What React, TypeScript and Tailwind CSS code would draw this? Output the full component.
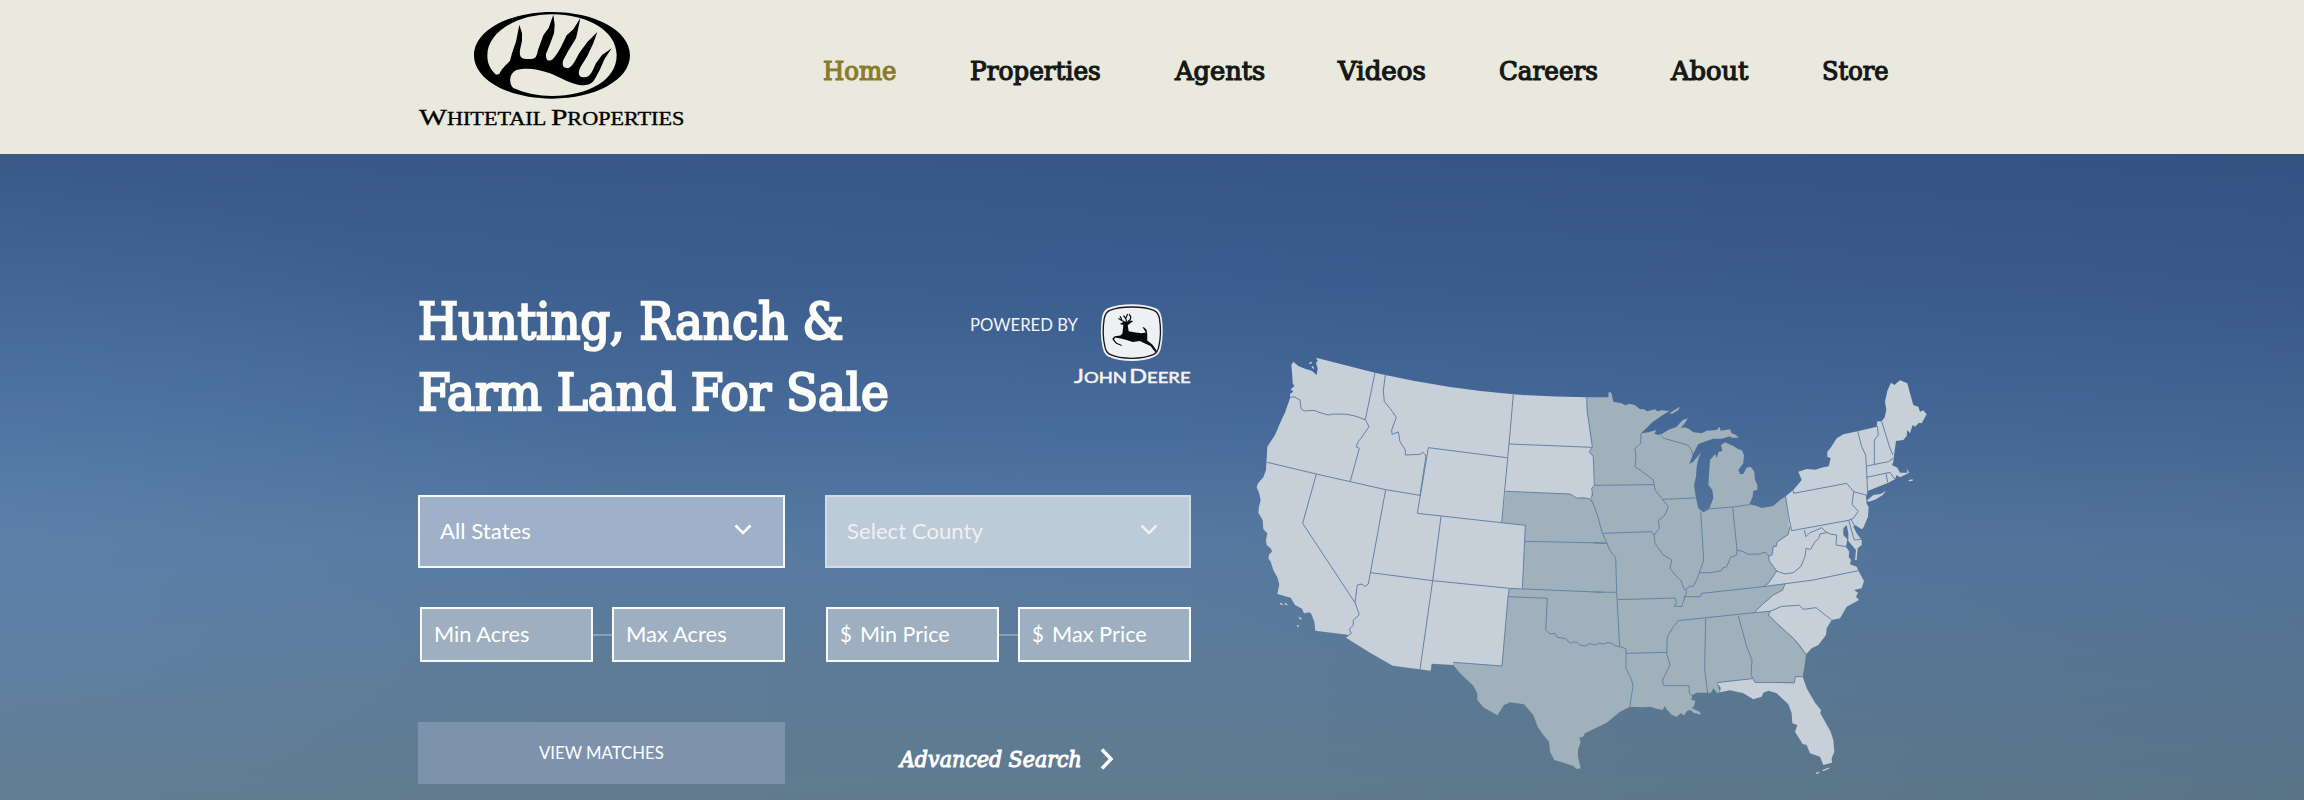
import { useLayoutEffect, useRef, useState, type ReactNode } from "react";

/** Keeps a line of text at an exact width by scaling it horizontally. */
function Fit({ width, className = "", children }: { width: number; className?: string; children: ReactNode }) {
  const ref = useRef<HTMLSpanElement>(null);
  const [scale, setScale] = useState(1);
  useLayoutEffect(() => {
    if (ref.current && ref.current.offsetWidth > 0) setScale(width / ref.current.offsetWidth);
  }, [width]);
  return (
    <span className="block shrink-0 whitespace-nowrap" style={{ width }}>
      <span ref={ref} className={`inline-block origin-left ${className}`} style={{ transform: `scaleX(${scale})` }}>
        {children}
      </span>
    </span>
  );
}

const slab = "font-['DejaVu_Serif',serif] [font-stretch:condensed] font-normal [-webkit-text-stroke:0.045em_currentColor]";
const sans = "font-['Lato',sans-serif]";

const navItems = [
  { label: "Home", width: 74, active: true },
  { label: "Properties", width: 131 },
  { label: "Agents", width: 90 },
  { label: "Videos", width: 88 },
  { label: "Careers", width: 99 },
  { label: "About", width: 77 },
  { label: "Store", width: 67 },
];

function Logo() {
  return (
    <div className="flex w-[300px] flex-col">
      <svg viewBox="0 0 900 300" className="block h-[100px] w-[300px]">
        <path
          fillRule="evenodd"
          fill="#000"
          d="M456 36C586 36 690 92 690 166S586 296 456 296S222 240 222 166S326 36 456 36Z M456 43C350 43 262 96 262 166C262 190 270 208 288 224L298 222C304 206 318 196 330 182L336 160L348 125L358 74L366 100L366 122L360 150C358 168 362 177 378 177L394 177C408 177 411 165 414 150L430 106L446 84L460 44L464 74L462 100L450 132L438 162C436 182 448 186 458 178C476 160 488 130 500 106L520 88L541 54L533 94L528 115L505 152L490 180C484 200 492 206 506 204C522 196 528 174 540 156L562 126L592 96L580 130L562 168L542 200C532 220 536 231 550 232C574 234 578 208 588 190L606 165L635 145L614 176L598 212L584 238C574 256 556 258 534 254C504 248 480 232 450 220C414 206 378 202 350 210C326 220 326 252 340 264C374 280 416 288 456 288C566 288 650 240 650 166S562 43 456 43Z"
        />
      </svg>
      <div className="mt-[4px] ml-[19px] h-[30px] leading-[26px] text-black">
        <Fit width={265} className="font-['Liberation_Serif',serif] text-[18px] [-webkit-text-stroke:0.35px_#000]">
          <span className="text-[24px]">W</span>HITETAIL <span className="text-[24px]">P</span>ROPERTIES
        </Fit>
      </div>
    </div>
  );
}

function DeereLogo() {
  return (
    <div className="flex w-[120px] flex-col items-center">
      <svg viewBox="146 38 192 178" className="block h-[59px] w-[64px]">
        <path
          fill="#eef0f3"
          d="M241 42C268 42 294 46 314 54C326 60 330 72 332 84C336 112 336 142 330 170C328 184 322 194 310 200C290 209 266 213 241 213S192 209 172 200C160 194 156 184 153 170C147 142 147 112 151 84C153 72 157 60 169 54C188 46 214 42 241 42Z"
        />
        <path
          fill="none"
          stroke="#15171c"
          strokeWidth="4"
          d="M241 50C268 50 290 53 308 60C320 65 323 74 325 86C329 112 329 142 323 168C321 181 317 189 306 194C288 202 266 205 241 205S194 202 177 194C166 189 162 181 160 168C154 142 154 112 158 86C160 74 163 65 175 60C193 53 214 50 241 50Z"
        />
        <path
          fill="#07080a"
          d="M205 101L218 94L227 94L241 91L245 93L234 101L229 105L232 123L248 126L270 129L284 127L277 116L273 112L278 111L286 119L288 132L288 151L304 164L316 181L315 188L308 181L298 168L278 159L266 153L244 156L226 150L208 145L191 142L188 149L196 158L211 165L211 168L194 161L184 150L183 145L190 138L207 136L213 130L216 104Z"
        />
        <path
          fill="none"
          stroke="#07080a"
          strokeWidth="3.5"
          d="M219 95C214 90 206 91 201 84M212 91L206 78M226 94L223 84L229 71M223 84L216 76M230 93C239 88 242 80 233 72"
        />
      </svg>
      <div className="mt-[4px] h-[20px] leading-[20px] text-[#f4f4f0]">
        <Fit width={117} className={`${sans} text-[15px] [-webkit-text-stroke:0.5px_currentColor]`}>
          <span className="text-[19px]">J</span>OHN <span className="-ml-[2px] text-[19px]">D</span>EERE
        </Fit>
      </div>
    </div>
  );
}

function ChevronDown() {
  return (
    <svg viewBox="0 0 18 12" className="h-[12px] w-[18px]">
      <path d="M1.5 1.5L9 9L16.5 1.5" fill="none" stroke="currentColor" strokeWidth="2.5" />
    </svg>
  );
}

function Select({ label, width, muted = false }: { label: string; width: number; muted?: boolean }) {
  return (
    <div
      className={`flex h-[73px] items-center justify-between border-2 pr-[31px] pb-[3px] pl-[20px] text-[22px] leading-[30px] ${
        muted ? "w-[366px] border-[#d3dce5] bg-[#bdcad7] text-[#edf1f4]" : "w-[367px] border-[#f6f8fa] bg-[#9eb1c9] text-white"
      }`}
    >
      <Fit width={width} className={sans}>{label}</Fit>
      <ChevronDown />
    </div>
  );
}

function RangeField({ label, width, money = false }: { label: string; width: number; money?: boolean }) {
  return (
    <div className="flex h-[55px] w-[173px] items-center border-2 border-[#f6f8fa] bg-[#9eafc1] pb-[2px] pl-[12px] text-[22px] leading-[30px] text-white">
      {money && (
        <span className="mr-[8px]">
          <Fit width={12} className={sans}>$</Fit>
        </span>
      )}
      <Fit width={width} className={sans}>{label}</Fit>
    </div>
  );
}

const west =
  "M228 53L405 98L436 105Q620 146 820 163Q930 171 1040 172L1040 210L1046 240L1050 285L1057 320L1048 335L1060 350L1063 436L1055 443L1058 455L1052 465L1058 487L1045 475L1030 471L1010 474L990 462L797 454L785 548L856 556L847 748L808 745L804 770L786 978L640 967L640 975L575 971L572 992L458 977L390 938L318 893L328 885L226 872L223 845L214 822L208 817L192 820L186 806L165 795L152 773L112 762L118 733L112 712L100 690L92 665L85 655L88 642L96 635L93 626L80 615L78 600L82 580L70 568L68 540L55 518L57 500L62 480L57 458L50 442L54 430L70 412L78 390L82 320L105 285L120 250L136 215L150 175L150 162L160 155L152 148L163 138L158 130L157 110L154 75L160 65L175 78L195 86L215 92L230 105L233 85L228 70L233 62Z";

const central =
  "M80 82L145 82L146 66L154 68L160 95L185 100L195 106L210 101L225 106L240 118L250 117L262 124L285 118L292 124L305 121L328 123L305 137L275 158L262 172L243 190L265 187L290 180L283 191L295 195L305 192L325 180L350 170L368 150L384 145L375 158L362 175L375 172L388 178L400 187L425 190L440 182L470 180L479 170L482 182L510 178L515 190L528 195L536 203L515 203L510 199L485 206L460 206L440 213L415 222L408 235L398 255L388 282L400 275L422 248L415 268L410 290L408 320L402 345L408 385L415 415L430 427L447 418L460 385L457 360L445 345L448 300L450 270L466 252L470 265L476 245L487 243L483 225L495 217L520 228L535 238L545 240L552 255L550 280L535 300L540 312L550 312L560 293L572 290L583 305L585 330L592 345L592 360L580 362L578 380L568 403L590 408L605 414L640 408L660 390L678 378L690 482L684 494L675 500L652 515L648 530L640 528L636 555L625 560L628 573L650 603L625 640L610 650L675 641L668 660L640 675L630 685L605 705L583 728L630 724L625 735L645 755L700 805L720 825L738 853L735 880L728 920L706 920L703 940L585 937L577 925L470 938L480 965L472 970L460 955L453 968L410 968L397 975L394 990L406 992L402 1008L395 1014L420 1026L422 1034L400 1028L392 1020L382 1022L372 1036L362 1030L350 1040L335 1034L320 1018L314 1008L308 1020L290 1016L270 1010L250 1012L210 1010L180 1025L140 1058L75 1090L68 1102L58 1102L62 1115L54 1140L54 1160L62 1195L50 1197L40 1188L10 1178L-17 1170L-30 1145L-33 1115L-50 1095L-67 1070L-80 1035L-108 1003L-150 997L-168 1005L-188 1036L-230 1012L-248 990L-248 970L-260 947L-300 910L-320 885L-320 877L-200 870L-230 440L-150 300Z";

const east =
  "M678 378L700 360L725 330L715 305L740 297L765 299L790 292L806 289L812 265L802 260L802 245L812 233L830 205L850 193L893 184L950 170L952 154L965 154L974 142L979 120L975 95L982 62L993 38L1003 45L1020 31L1042 40L1050 70L1060 105L1075 110L1080 125L1090 121L1100 133L1085 160L1077 158L1065 170L1058 165L1050 190L1042 180L1040 198L1030 210L1008 213L1003 250L1000 275L996 285L1012 293L1020 308L1043 308L1040 295L1048 308L1020 322L1010 315L1005 328L985 338L925 362L918 378L920 402L926 410L924 440L910 473L905 478L885 465L880 470L890 490L905 510L905 525L893 535L890 570L885 570L888 540L875 525L865 513L865 490L860 465L850 475L850 495L862 508L858 530L868 545L866 560L873 570L870 583L890 590L895 602L912 633L905 655L882 660L894 668L888 680L897 690L860 710L840 745L815 750L800 775L798 795L775 825L755 835L738 853L720 825L700 805L645 755L625 735L630 724L583 728L605 705L630 685L640 675L668 660L675 641L610 650L625 640L650 603L628 573L625 560L636 555L640 528L648 530L652 515L675 500L684 494L688 482Z";

const florida =
  "M470 938L577 925L585 937L703 940L706 920L728 920L740 955L765 998L783 1020L781 1030L812 1085L820 1110L823 1145L815 1165L816 1178L790 1185L780 1160L750 1150L740 1125L728 1122L705 1085L712 1065L697 1060L695 1030L685 1003L650 970L625 962L610 968L605 980L580 988L550 970L510 961L480 967L482 953Z";

const longIsland = "M920 392L940 375L962 372L978 362L968 375L948 388L928 395Z";

const islands =
  "M120 790L128 794M134 791L142 794M177 832L184 838M172 855L176 861M207 70L216 68M216 78L221 86M1728 1300L1738 1297M1748 1292L1768 1284M2006 422L2018 420";

const westBorders =
  "M150 172L162 170L180 180L183 205L192 213L222 211L240 218L265 225L280 222L320 223L345 228L376 239M405 98L376 239L387 260L368 288L355 305L348 320L358 325L331 423M436 105L430 152L433 185L450 205L469 232L455 270L456 283L475 276L480 305L496 330L496 345L540 343L549 337L558 348L540 466M565 323L532 520L856 556M565 323L800 353M820 163L807 312L785 548M807 312L1057 322M82 367L229 402L437 449L540 466M229 402L188 550L345 788L358 824L340 840L340 855L328 868L334 880L326 886M345 788L352 735L366 732L374 740L385 732L437 449M392 698L578 722L808 745L1090 757M603 530L578 722L540 988M797 454L990 462L1010 474L1045 475L1058 487M854 604L1100 609M856 556L847 748M808 745L804 770L922 775L917 870L930 882L945 880L952 892L978 896M804 770L786 978L640 967";

const eastBorders =
  "M80 82L82 130L87 160L97 230L88 245L100 260L103 346L95 355L98 375L92 385L98 397M103 346L283 344M98 397L112 435L127 490L140 518L152 545L167 563L170 665L179 830M100 519L140 520M100 666L170 667M127 490L275 485L282 495L285 520L310 555L335 570L330 595L345 615L362 630L372 655L380 665L365 710L342 708L350 698L345 684L174 689M243 190L242 220L225 235L228 265L225 290L245 303L280 330L285 360L305 385L325 410L315 435L295 452L298 475L283 495M308 388L407 384M303 197L312 205L385 226L395 240L398 255M422 425L431 570L418 608L412 625L400 648L388 650L374 660M430 418L518 411L568 404M518 411L531 540L530 555L512 562L500 590L488 594L484 602L470 605L450 608L418 608M531 540L550 545L565 553L600 552L615 546L628 560M370 680L420 680L425 670L610 650M18 806L30 820L40 816L50 817L60 825L76 828L88 821L108 825L116 819L130 822L142 818L155 820L165 827L179 830M179 830L198 836L198 895L215 930L219 950L209 1010M198 850L322 847M583 728L440 743L355 752L340 770L322 800L320 850L330 885L308 930L310 947L387 947L388 970L397 978M437 745L434 900L443 968M535 738L560 830L576 870L573 915L585 937L703 938L706 920L728 920M470 938L577 926M676 378L688 450L695 482L866 451L880 445L895 424L876 403L881 365L860 340L701 370L700 362M881 365L918 375M893 184L905 230L917 255L920 305L923 370M952 168L955 195L943 210L943 282M965 154L990 235L999 255M920 288L985 275L1000 265M919 322L990 307L1005 328M978 310L983 337M866 451L883 510L904 508M872 446L885 470M733 480L738 500L750 488L765 482L785 473L798 486L810 492L830 495L828 525L860 530M800 488L780 492L776 506L765 515L752 538L738 535L735 560L722 590L700 608L675 612L650 603M610 650L760 630L895 602M625 738L630 724L665 709L718 706L730 718L768 713L815 750M625 735L645 755L700 805L738 853M690 470L684 494L675 500L652 515L648 530L640 528L636 555L625 560L628 573L650 603L625 640L610 650M675 641L668 660L640 675L605 705L583 728L630 724";

function StatesMap() {
  return (
    <svg viewBox="0 0 2100 1350" className="block h-[450px] w-[700px]" strokeLinejoin="round">
      <g transform="translate(960 90)">
        <path d={central} fill="#a0b1bb" />
        <path d="M328 130L340 122L360 110L355 120L337 131Z" fill="#a0b1bb" />
      </g>
      <path d={west} fill="#c7cfd8" />
      <path d={islands} stroke="#c7cfd8" strokeWidth="4" fill="none" />
      <g transform="translate(960 90)" fill="#c7cfd8">
        <path d={east} />
        <path d={florida} />
        <path d={longIsland} />
      </g>
      <g fill="none" stroke="#6382a6" strokeWidth="3">
        <path d={westBorders} />
        <path d={eastBorders} transform="translate(960 90)" />
      </g>
    </svg>
  );
}

export default function App() {
  return (
    <div className="flex h-[800px] w-[2304px] flex-col overflow-hidden">
      <header className="flex h-[154px] shrink-0 bg-[#e9e9dd] pl-[400px]">
        <Logo />
        <nav className="ml-[123px] flex gap-[73.3px] pt-[52px] text-[26px] leading-[36px] text-[#161815]">
          {navItems.map((item) => (
            <a key={item.label} className={item.active ? "text-[#8c7a2b]" : ""}>
              <Fit width={item.width} className={slab}>{item.label}</Fit>
            </a>
          ))}
        </nav>
      </header>

      <main className="flex grow bg-[radial-gradient(ellipse_620px_360px_at_0px_380px,rgba(96,136,184,0.4),rgba(96,136,184,0)),linear-gradient(to_right,rgba(110,140,150,0.08),rgba(0,0,0,0)_50%,rgba(40,60,90,0.12)),linear-gradient(to_bottom,#355687_0%,#3b5d8f_20%,#476b9a_42%,#5679a1_60%,#5b7b9a_76%,#617b8d_100%)] pl-[418px]">
        <section className="flex w-[773px] flex-col">
          <div className="flex h-[341px] justify-between pt-[131px]">
            <h1 className="text-[51px] leading-[69px] text-[#fbfbf8]">
              <Fit width={426} className={slab}>Hunting, Ranch &amp;</Fit>
              <Fit width={471} className={slab}>Farm Land For Sale</Fit>
            </h1>
            <div className="flex pt-[18px]">
              <div className="pt-[10px] text-[17px] leading-[24px] text-[#f3f5f7]">
                <Fit width={108} className={sans}>POWERED BY</Fit>
              </div>
              <div className="-mr-[1px] -ml-[6px]">
                <DeereLogo />
              </div>
            </div>
          </div>

          <div className="flex justify-between">
            <Select label="All States" width={91} />
            <Select label="Select County" width={136} muted />
          </div>

          <div className="mt-[39px] flex justify-between">
            <div className="flex items-center pl-[2px]">
              <RangeField label="Min Acres" width={96} />
              <div className="h-[2px] w-[19px] bg-[#86a0bc]" />
              <RangeField label="Max Acres" width={101} />
            </div>
            <div className="flex items-center">
              <RangeField label="Min Price" width={90} money />
              <div className="h-[2px] w-[19px] bg-[#86a0bc]" />
              <RangeField label="Max Price" width={95} money />
            </div>
          </div>

          <div className="mt-[60px] flex">
            <button className="flex h-[62px] w-[367px] items-center justify-center bg-[#7d93ac] text-[17px] leading-[24px] text-white">
              <Fit width={125} className={sans}>VIEW MATCHES</Fit>
            </button>
            <a className="ml-[115px] flex h-[62px] items-center pt-[11px] text-[22px] leading-[30px] text-white">
              <Fit width={182} className={`${slab} italic`}>Advanced Search</Fit>
              <svg viewBox="0 0 14 22" className="ml-[18px] h-[22px] w-[14px]">
                <path d="M2 1.5L11 11L2 20.5" fill="none" stroke="currentColor" strokeWidth="3.5" />
              </svg>
            </a>
          </div>
        </section>

        <section className="ml-[49px] pt-[186px]">
          <StatesMap />
        </section>
      </main>
    </div>
  );
}
